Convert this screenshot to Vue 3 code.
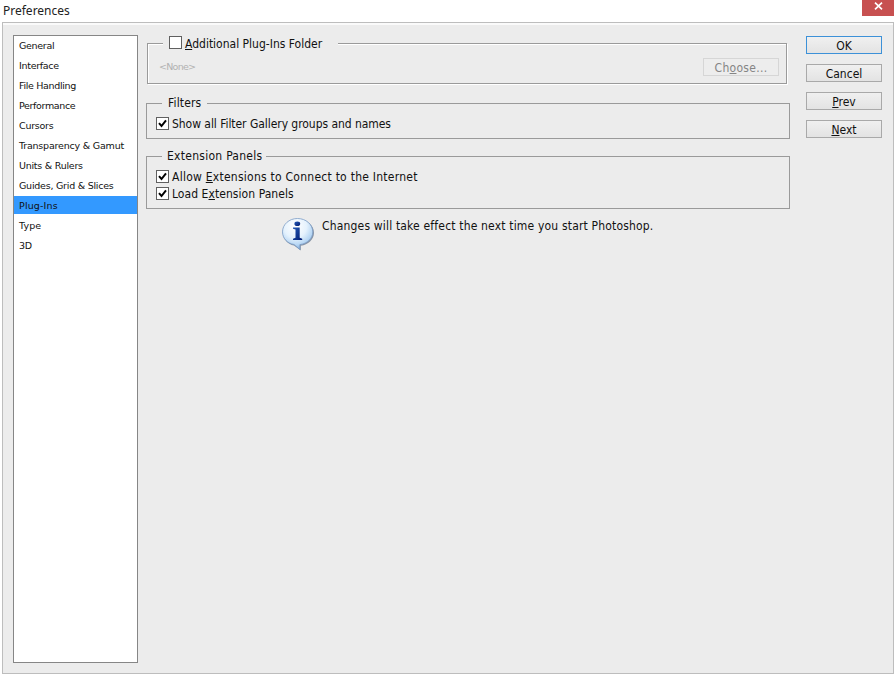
<script setup>
import { ref } from 'vue'

const categories = [
  { name: 'General', spacing: -0.3 },
  { name: 'Interface', spacing: -0.3 },
  { name: 'File Handling', spacing: -0.33 },
  { name: 'Performance', spacing: -0.35 },
  { name: 'Cursors', spacing: -0.25 },
  { name: 'Transparency & Gamut', spacing: -0.2 },
  { name: 'Units & Rulers', spacing: -0.25 },
  { name: 'Guides, Grid & Slices', spacing: -0.24 },
  { name: 'Plug-Ins', spacing: 0.15 },
  { name: 'Type', spacing: 0.1 },
  { name: '3D', spacing: -0.4 },
]
const selected = ref('Plug-Ins')
const additional = ref(false)
const showAll = ref(true)
const allow = ref(true)
const load = ref(true)
</script>

<template>
  <div class="window">
    <header class="titlebar">
      <span class="title">Preferences</span>
      <button class="close" aria-label="Close">
        <svg width="9" height="8" viewBox="0 0 9 8"><path d="M1 .7 8 7.3M8 .7 1 7.3" stroke="#fff" stroke-width="1.7" /></svg>
      </button>
    </header>
    <div class="dialog">
      <ul class="list">
        <li v-for="c in categories" :key="c.name" :class="{ active: c.name === selected }" :style="{ letterSpacing: c.spacing + 'px' }" @click="selected = c.name">{{ c.name }}</li>
      </ul>
      <main class="content">
        <section class="group etched">
          <div class="legend folder" @click="additional = !additional">
            <span class="box"><svg v-if="additional" viewBox="0 0 11 11"><path d="M2 5.2 4.5 8 9 2.3" /></svg></span>
            <span class="t-folder"><u>A</u>dditional Plug-Ins Folder</span>
          </div>
          <div class="folder-row">
            <span class="none">&lt;None&gt;</span>
            <button class="btn disabled" disabled><span>Ch<u>o</u>ose...</span></button>
          </div>
        </section>
        <section class="group filters">
          <div class="legend"><span class="t-filters">Filters</span></div>
          <div class="check" @click="showAll = !showAll">
            <span class="box"><svg v-if="showAll" viewBox="0 0 11 11"><path d="M2 5.2 4.5 8 9 2.3" /></svg></span>
            <span class="t-show">Show all Filter Gallery groups and names</span>
          </div>
        </section>
        <section class="group panels">
          <div class="legend"><span class="t-panels">Extension Panels</span></div>
          <div class="check" @click="allow = !allow">
            <span class="box"><svg v-if="allow" viewBox="0 0 11 11"><path d="M2 5.2 4.5 8 9 2.3" /></svg></span>
            <span class="t-allow">Allow <u>E</u>xtensions to Connect to the Internet</span>
          </div>
          <div class="check" @click="load = !load">
            <span class="box"><svg v-if="load" viewBox="0 0 11 11"><path d="M2 5.2 4.5 8 9 2.3" /></svg></span>
            <span class="t-load">Load E<u>x</u>tension Panels</span>
          </div>
        </section>
        <div class="notice">
          <svg class="info" width="34" height="34" viewBox="0 0 34 34">
            <defs>
              <radialGradient id="bubble" cx=".42" cy=".25" r=".75">
                <stop offset="0" stop-color="#fff" />
                <stop offset=".5" stop-color="#e5f2fd" />
                <stop offset=".8" stop-color="#b5d5f3" />
                <stop offset="1" stop-color="#7ea9d8" />
              </radialGradient>
              <linearGradient id="glyph" x1="0" y1="0" x2="1" y2="1">
                <stop offset="0" stop-color="#2459b5" />
                <stop offset="1" stop-color="#001b72" />
              </linearGradient>
            </defs>
            <path d="M17 2.500C8.700 2.500 2 8 2 15.700C2 22.500 7 27.300 13 28.500L19.800 33.500V28.700C27 27.500 33 22.700 33 15.700C33 8 26 2.500 17 2.500Z" fill="#66758c" opacity=".75" />
            <path d="M16.500 1.500C8 1.500 1.500 7.500 1.500 14.900C1.500 21.500 6.500 26.400 13 27.500L18.900 32.600V27.600C26.500 26.700 31.800 21.400 31.800 14.900C31.800 7.500 25 1.500 16.500 1.500Z" fill="url(#bubble)" stroke="#7b9cc5" stroke-width=".8" />
            <ellipse cx="16.300" cy="6.800" rx="2.900" ry="2.300" fill="url(#glyph)" />
            <path d="M12 10.500H18.700V20.800L21.200 21.700V23H12V21.700L14.500 20.800V12.500L12 11.700Z" fill="url(#glyph)" />
          </svg>
          <span class="t-notice">Changes will take effect the next time you start Photoshop.</span>
        </div>
      </main>
      <aside class="actions">
        <button class="btn primary"><span>OK</span></button>
        <button class="btn"><span>Cancel</span></button>
        <button class="btn"><span><u>P</u>rev</span></button>
        <button class="btn"><span><u>N</u>ext</span></button>
      </aside>
    </div>
  </div>
</template>

<style>
body { background: #fff; overflow: hidden; }
</style>

<style scoped>
* { box-sizing: border-box; }
.window { width: 896px; height: 676px; background: #fff; color: #111; font: 12px/16px "DejaVu Sans Condensed", "DejaVu Sans", sans-serif; font-stretch: condensed; white-space: nowrap; }
button { font: inherit; color: inherit; padding: 0; }
u { text-decoration: underline; text-decoration-thickness: 1px; text-underline-offset: 1px; text-decoration-skip-ink: none; }
.titlebar { height: 22px; display: flex; justify-content: space-between; align-items: flex-start; padding: 0 2px 0 3px; }
.title { padding-top: 3px; font-family: "Noto Sans", sans-serif; font-stretch: normal; color: #222; }
.close { width: 32px; height: 16px; border: 0; background: #c75050; display: flex; justify-content: center; padding-top: 2px; }
.dialog { width: 892px; height: 652px; margin-left: 2px; border: 1px solid #bdbdbd; background: #ececec; box-shadow: inset 0 2px #fafafa; display: flex; padding: 12px 11px 10px 10px; }
.list { width: 125px; height: 628px; margin: 0; padding: 0; list-style: none; background: #fff; border: 1px solid #868686; font: 9.5px/18px "DejaVu Sans", sans-serif; }
.list li { height: 18px; margin-bottom: 2px; padding: 1px 0 0 5px; }
.list li.active { background: #3399ff; }
.content { width: 644px; margin-left: 8px; padding-top: 8px; }
.group { border: 1px solid #9a9a9a; }
.legend { width: fit-content; height: 16px; margin: -9px 0 0 15px; padding: 0 6px 0 6px; background: #ececec; }
.etched { width: 640px; height: 41px; margin-left: 1px; box-shadow: 1px 1px #fff, inset 1px 1px #fff; }
.folder { width: 175px; padding: 0 0 0 6px; display: flex; gap: 3px; align-items: flex-start; }
.folder .box { margin-top: 1px; }
.t-folder { padding-top: 1px; }
.box { width: 13px; height: 13px; flex: none; border: 1px solid #606060; background: #fff; display: flex; }
.box svg { width: 11px; height: 11px; }
.box path { fill: none; stroke: #000; stroke-width: 2; }
.folder-row { display: flex; justify-content: space-between; align-items: flex-start; padding: 7px 7px 0 11px; }
.none { font: 9.5px/17px "DejaVu Sans", sans-serif; color: #b2b2b2; letter-spacing: -.75px; }
.btn { width: 76px; height: 18px; border: 1px solid #a9a9a9; background: linear-gradient(#f0f0f0, #e3e3e3); display: flex; justify-content: center; align-items: flex-start; line-height: 16px; }
.btn span { padding-top: 1px; }
.btn.primary { border-color: #3c91d8; }
.btn.disabled { color: #858585; border-color: #d6d6d6; background: #ededed; letter-spacing: .3px; }
.filters { height: 36px; margin-top: 19px; }
.filters .legend { width: 45px; }
.panels { height: 53px; margin-top: 17px; }
.panels .legend { width: 104px; padding-left: 5px; }
.check { display: flex; align-items: center; gap: 3px; height: 17px; margin-left: 9px; }
.filters .check, .panels .legend + .check { margin-top: 4px; }
.notice { display: flex; padding-left: 135px; margin-top: 8px; }
.info { margin-right: 7px; }
.t-filters { letter-spacing: .15px; }
.t-panels { letter-spacing: .27px; }
.t-show { letter-spacing: -.05px; }
.t-allow { letter-spacing: .25px; }
.t-load { letter-spacing: .06px; }
.t-notice { padding-top: 1px; letter-spacing: .175px; }
.actions { margin-left: 16px; display: flex; flex-direction: column; gap: 10px; padding-top: 1px; }
</style>
